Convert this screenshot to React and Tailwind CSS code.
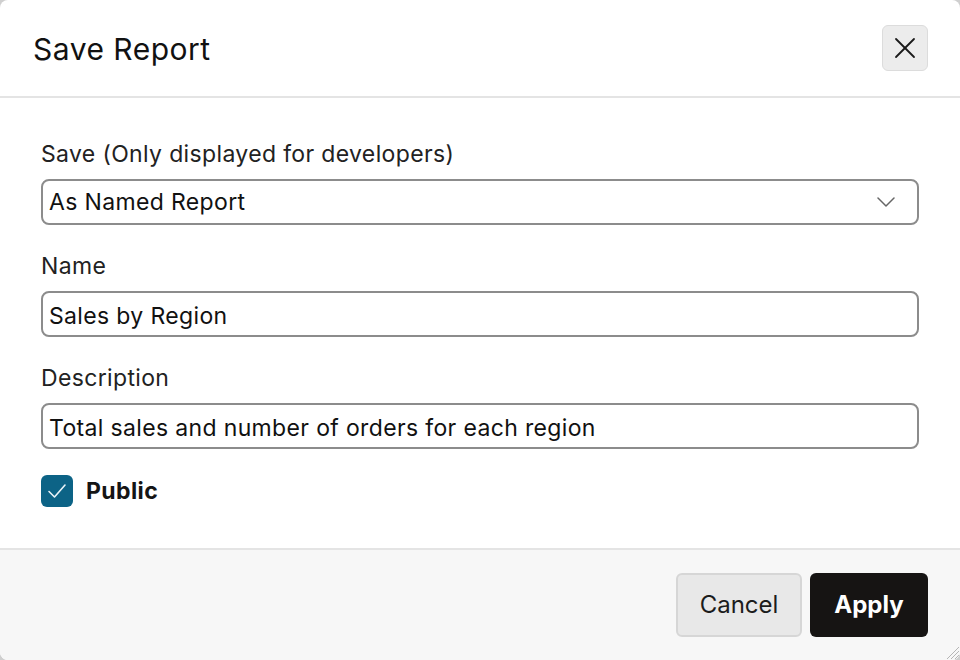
import { useState } from "react";

const fontStack = { fontFamily: "Inter, 'Noto Sans', sans-serif" };

const Field = ({ label, children, className = "" }) => (
    <div className={className}>
        <label className="block text-[23px] leading-[28px] tracking-[0.35px] text-[#222]">{label}</label>
        <div className="mt-[11px]">{children}</div>
    </div>
);

const SaveReportDialog = () => {
    const [isPublic, setIsPublic] = useState(true);

    return (
        <div className="relative flex h-[660px] w-[960px] flex-col overflow-hidden rounded-lg bg-white" style={fontStack}>
            {/* header */}
            <div className="flex h-[98px] items-center justify-between border-b-2 border-[#e4e4e4] pl-[33px] pr-[32px]">
                <h1 className="pt-[2px] text-[30px] font-normal tracking-[0.5px] text-[#111]">Save Report</h1>
                <button className="flex h-[46px] w-[46px] items-center justify-center rounded-md border border-[#dcdcdc] bg-[#ececec]">
                    <svg width="22" height="22" viewBox="0 0 22 22" fill="none" stroke="#1a1a1a" strokeWidth="1.8" strokeLinecap="round">
                        <line x1="2" y1="2" x2="20" y2="20" />
                        <line x1="20" y1="2" x2="2" y2="20" />
                    </svg>
                </button>
            </div>

            {/* body */}
            <div className="flex-1 px-[41px] pt-[42px]">
                <Field label="Save (Only displayed for developers)">
                    <div className="flex h-[46px] items-center justify-between rounded-lg border-2 border-[#8c8c8c] pl-[6px] pr-[22px]">
                        <span className="pt-[1px] text-[23px] tracking-[0.35px] text-[#111]">As Named Report</span>
                        <svg width="18" height="10" viewBox="0 0 18 10" fill="none" stroke="#666" strokeWidth="1.5" strokeLinecap="round" strokeLinejoin="round">
                            <polyline points="1,1 9,9 17,1" />
                        </svg>
                    </div>
                </Field>

                <Field label="Name" className="mt-[27px]">
                    <div className="flex h-[46px] items-center rounded-lg border-2 border-[#8c8c8c] px-[6px] pt-[4px] text-[23px] tracking-[0.35px] text-[#111]">
                        Sales by Region
                    </div>
                </Field>

                <Field label="Description" className="mt-[27px]">
                    <div className="flex h-[46px] items-center rounded-lg border-2 border-[#8c8c8c] px-[6px] pt-[4px] text-[23px] tracking-[0.35px] text-[#111]">
                        Total sales and number of orders for each region
                    </div>
                </Field>

                <label className="mt-[25px] flex items-center gap-[13px]" onClick={() => setIsPublic(!isPublic)}>
                    <span className="flex h-[32px] w-[32px] items-center justify-center rounded-[6px] bg-[#0c6386]">
                        {isPublic && (
                            <svg width="22" height="22" viewBox="0 0 22 22" fill="none" stroke="#e8f3f8" strokeWidth="1.6" strokeLinecap="round" strokeLinejoin="round">
                                <polyline points="3,11.5 8.5,17 19,5" />
                            </svg>
                        )}
                    </span>
                    <span className="text-[23px] font-bold tracking-[0.4px] text-[#151515]">Public</span>
                </label>
            </div>

            {/* footer */}
            <div className="flex h-[112px] items-start justify-end gap-2 border-t-2 border-[#e4e4e4] bg-[#f7f7f7] pr-[32px] pt-[23px]">
                <button className="h-[64px] w-[126px] rounded-md border-2 border-[#d6d6d6] bg-[#e8e8e8] text-[24px] text-[#1c1c1c]">
                    Cancel
                </button>
                <button className="h-[64px] w-[118px] rounded-md bg-[#161413] text-[24px] font-bold text-white">
                    Apply
                </button>
            </div>

            {/* resize grip */}
            <svg className="absolute bottom-0 right-0" width="18" height="18" viewBox="0 0 18 18" stroke="#b5b5b5" strokeWidth="1">
                <line x1="17" y1="5" x2="5" y2="17" />
                <line x1="17" y1="9" x2="9" y2="17" />
                <line x1="17" y1="13" x2="13" y2="17" />
            </svg>
        </div>
    );
};

export default function App() {
    return (
        <div className="h-[660px] w-[960px] bg-[#cfcfcf]">
            <SaveReportDialog />
        </div>
    );
}
